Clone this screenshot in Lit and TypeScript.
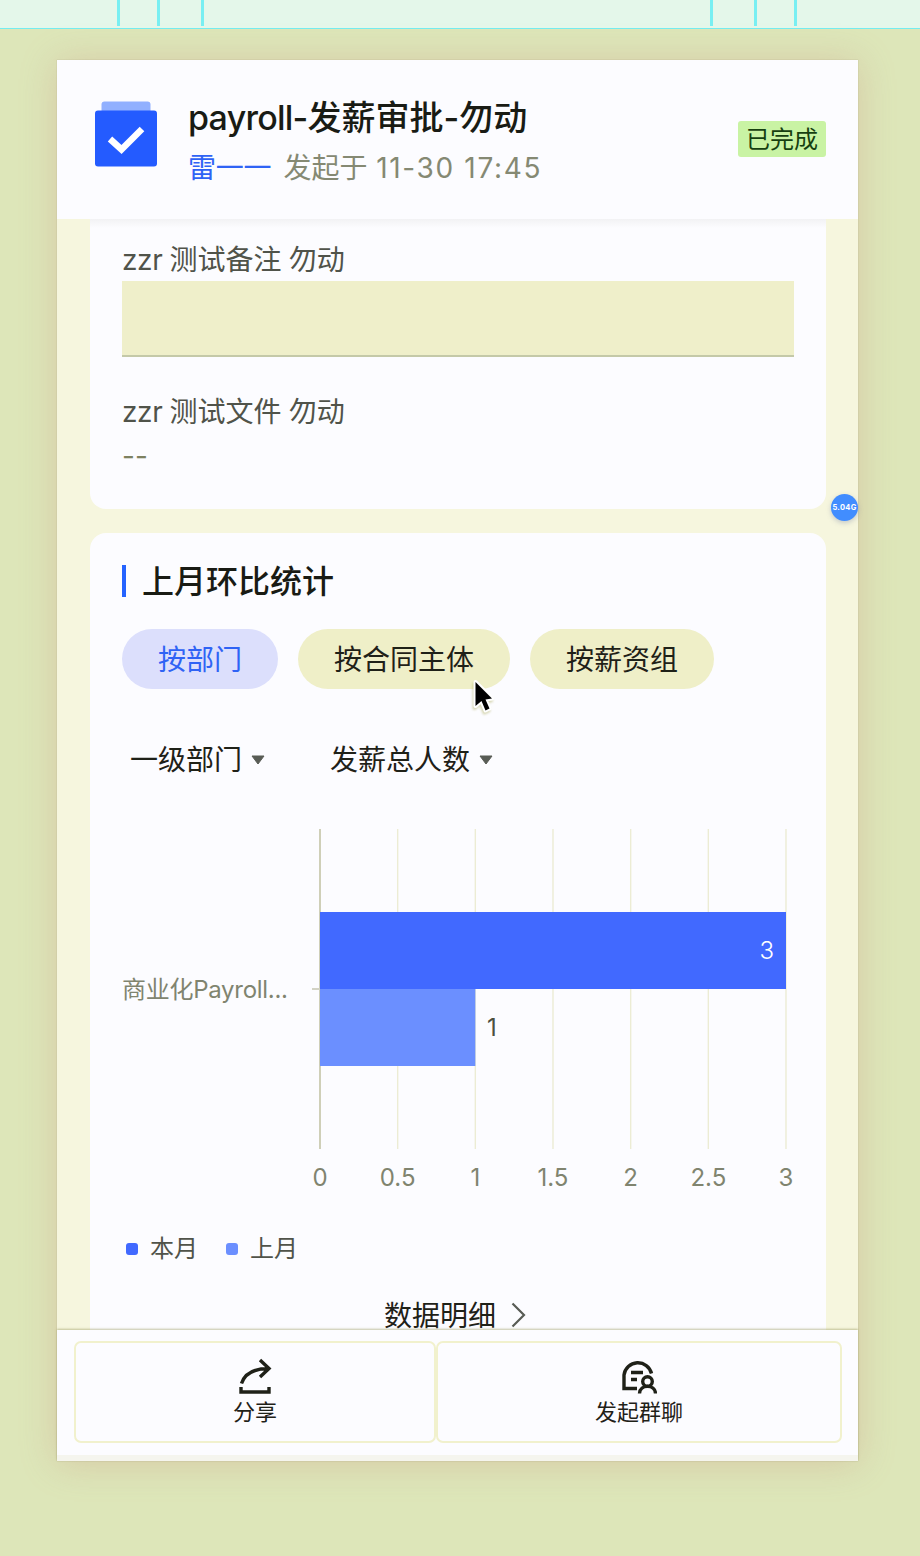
import { LitElement, html, svg, css } from "lit";
import { customElement } from "lit/decorators.js";

const AXIS_X = 198;
const AXIS_W = 466;
const MAX = 3;
const TICKS = [0, 0.5, 1, 1.5, 2, 2.5, 3];
const scale = (v: number) => AXIS_X + (v / MAX) * AXIS_W;

@customElement("month-chart")
export class MonthChart extends LitElement {
  static styles = css`
    :host { display: block; height: 370px; }
    svg { display: block; }
    .tick { font: 24px Inter, "Noto Sans CJK SC", sans-serif; fill: #80846f; }
    .label { font: 24px Inter, "Noto Sans CJK SC", sans-serif; fill: #80846f; }
    .value { font: 24px Inter, sans-serif; fill: #4c5040; }
    .inside { fill: #fff; font-weight: 300; }
  `;
  render() {
    return html`<svg width="672" height="370" viewBox="0 0 672 370">
      ${TICKS.slice(1).map((t) => svg`<path d=${`M${scale(t)} 0V320`} stroke="#ececd4" stroke-width="1.4"/>`)}
      <path d="M198 0V320" stroke="#cfcfb8" stroke-width="2" />
      <path d="M190 160H198" stroke="#d2d2c4" stroke-width="2" />
      <rect x="198" y="83" width=${(3 / MAX) * AXIS_W} height="77" fill="#4169ff" />
      <rect x="198" y="160" width=${(1 / MAX) * AXIS_W} height="77" fill="#6b8fff" />
      <text class="value inside" x="652" y="130" text-anchor="end">3</text>
      <text class="value" x="365" y="207">1</text>
      <text class="label" x="0" y="169" textLength="166" lengthAdjust="spacing">商业化Payroll...</text>
      ${TICKS.map((t) => svg`<text class="tick" x=${scale(t)} y="357" text-anchor="middle">${t}</text>`)}
    </svg>`;
  }
}

@customElement("app-root")
export class AppRoot extends LitElement {
  static styles = css`
    :host {
      display: block;
      position: relative;
      height: 1556px;
      overflow: hidden;
      background: #dde6b9;
      font-family: Inter, "Noto Sans CJK SC", sans-serif;
      color: #1f2118;
    }
    * { box-sizing: border-box; }
    .ruler {
      height: 29px;
      background: #e4f7ea;
      border-bottom: 1px solid #74edf0;
      display: flex;
      justify-content: space-between;
      padding: 0 123px 0 117px;
    }
    .ticks { display: flex; }
    .ticks i { width: 3px; height: 26px; background: #78eff2; }
    .left i:nth-child(1) { margin-right: 37px; }
    .left i:nth-child(2) { margin-right: 41px; }
    .right i:nth-child(1) { margin-right: 41px; }
    .right i:nth-child(2) { margin-right: 37px; }
    .window {
      width: 801px;
      height: 1401px;
      margin: 31px 0 0 57px;
      display: flex;
      flex-direction: column;
      background: #f6f6de;
      box-shadow: 0 0 1px rgba(140, 130, 110, 0.5), 0 2px 34px rgba(200, 140, 120, 0.33);
    }
    .head {
      height: 159px;
      flex: none;
      background: #fcfcff;
      display: flex;
      align-items: flex-start;
      padding: 0 32px 0 38px;
    }
    .logo { margin: 41px 31px 0 0; display: block; flex: none; }
    .names { flex: 1; padding-top: 36px; }
    .title { font-size: 34px; line-height: 44px; font-weight: 500; white-space: nowrap; color: #191b14; }
    .latin { letter-spacing: -0.75px; }
    .sub { font-size: 28px; line-height: 40px; margin-top: 8px; color: #858973; white-space: nowrap; display: flex; gap: 12px; }
    .user { color: #2f63f5; letter-spacing: -0.2px; }
    .time { letter-spacing: 1.65px; margin-left: 1px; }
    .status {
      margin-top: 61px;
      width: 88px;
      height: 36px;
      border-radius: 3px;
      background: #c9f3a4;
      color: #163f10;
      font-size: 24px;
      line-height: 38px;
      text-align: center;
    }
    .scroll { flex: 1; overflow: hidden; padding: 0 32px 0 33px; display: flex; flex-direction: column; gap: 24px; min-height: 0; }
    .card { background: #fcfcff; flex: none; padding: 0 32px; }
    .form { height: 290px; border-radius: 0 0 16px 16px; padding-top: 21px; background: linear-gradient(#f2f2f4, #fcfcff 9px); }
    .name { font-size: 28px; line-height: 40px; color: #50534a; word-spacing: -0.6px; }
    .zzr { letter-spacing: -0.4px; }
    .field { height: 76px; background: #efefca; border-bottom: 2px solid #c4c9a8; margin: 1px 0 35px; }
    .none { font-size: 28px; line-height: 40px; margin-top: 4px; color: #7d8160; }
    .stats { height: 900px; border-radius: 16px; padding-top: 32px; }
    .heading { display: flex; align-items: center; gap: 16px; height: 32px; line-height: 32px; font-size: 32px; font-weight: 500; color: #191b14; white-space: nowrap; }
    .heading i { width: 4px; height: 32px; background: #2563ff; }
    .heading span { margin-top: 1px; }
    .pills { display: flex; gap: 20px; margin-top: 32px; }
    .pill { height: 60px; line-height: 62px; padding: 0 36px; border-radius: 30px; font-size: 28px; background: #efefc8; }
    .on { background: #dcdffc; color: #2f63f5; }
    .selects { display: flex; gap: 65px; margin: 51px 0 48px; padding-left: 8px; height: 41px; line-height: 41px; font-size: 28px; }
    .select { display: flex; align-items: center; gap: 9px; white-space: nowrap; }
    .select svg { margin-top: -2px; }
    .legend { display: flex; gap: 28px; margin-top: 30px; padding-left: 4px; height: 40px; font-size: 24px; color: #50534a; }
    .key { display: flex; align-items: center; gap: 12px; line-height: 40px; }
    .key span { margin-top: -1px; }
    .key i { width: 12px; height: 12px; border-radius: 3px; background: #4169ff; }
    .key .prev { background: #6b8fff; }
    .more { display: flex; align-items: center; justify-content: center; gap: 15px; margin: 26px 0 0 -6px; height: 40px; font-size: 28px; line-height: 40px; }
    .more span { margin-top: 1px; }
    .foot {
      height: 131px;
      flex: none;
      background: #fcfcff;
      border-bottom: 6px solid #f5f5ee;
      padding: 11px 16px 0 17px;
      display: flex;
      box-shadow: 0 -1px 2px rgba(150, 150, 90, 0.55);
      z-index: 1;
    }
    .action {
      width: 362px;
      height: 102px;
      border: 2px solid #f1f1cd;
      border-radius: 7px;
      display: flex;
      flex-direction: column;
      align-items: center;
      padding-top: 15px;
      font-size: 22px;
      line-height: 32px;
    }
    .wide { width: 406px; }
    .action svg { display: block; }
    .share { margin-left: 2px; }
    .memory {
      position: absolute;
      left: 831px;
      top: 494px;
      width: 27px;
      height: 27px;
      border-radius: 50%;
      background: #418dff;
      color: #fff;
      font-size: 7.5px;
      font-weight: 700;
      line-height: 27px;
      text-align: center;
      letter-spacing: 0.3px;
      box-shadow: 0 2px 5px rgba(110, 120, 160, 0.35);
    }
    .cursor { position: absolute; left: 470px; top: 675px; filter: drop-shadow(-1px 2px 1px rgba(170, 170, 90, 0.45)); }
  `;

  render() {
    const caret = html`<svg width="14" height="10" viewBox="0 0 14 10"><path d="M1 1H13L7 9Z" fill="#585c55" stroke="#585c55" stroke-linejoin="round"/></svg>`;
    return html`
      <div class="ruler">
        <div class="ticks left"><i></i><i></i><i></i></div>
        <div class="ticks right"><i></i><i></i><i></i></div>
      </div>
      <main class="window">
        <header class="head">
          <svg class="logo" width="62" height="66" viewBox="0 0 62 66">
            <rect x="6.5" y="0.5" width="49" height="20" rx="3" fill="#91b0ff" />
            <rect x="0" y="9.5" width="62" height="56" rx="3" fill="#245bff" />
            <path d="M15 38L26.500 48.500L47 28" fill="none" stroke="#fff" stroke-width="6.500" />
          </svg>
          <div class="names">
            <div class="title"><span class="latin">payroll-</span>发薪审批-勿动</div>
            <div class="sub"><span class="user">雷一一</span><span>发起于 <span class="time">11-30 17:45</span></span></div>
          </div>
          <div class="status">已完成</div>
        </header>
        <div class="scroll">
          <section class="card form">
            <div class="name"><span class="zzr">zzr</span> 测试备注 勿动</div>
            <div class="field"></div>
            <div class="name"><span class="zzr">zzr</span> 测试文件 勿动</div>
            <div class="none">--</div>
          </section>
          <section class="card stats">
            <div class="heading"><i></i><span>上月环比统计</span></div>
            <div class="pills">
              <div class="pill on">按部门</div>
              <div class="pill">按合同主体</div>
              <div class="pill">按薪资组</div>
            </div>
            <div class="selects">
              <div class="select">一级部门${caret}</div>
              <div class="select">发薪总人数${caret}</div>
            </div>
            <month-chart></month-chart>
            <div class="legend">
              <div class="key"><i></i><span>本月</span></div>
              <div class="key"><i class="prev"></i><span>上月</span></div>
            </div>
            <div class="more"><span>数据明细</span>
              <svg width="15" height="26" viewBox="0 0 15 26"><path d="M1.500 1.500L13 13L1.500 24.500" fill="none" stroke="#585c55" stroke-width="2.200"/></svg>
            </div>
          </section>
        </div>
        <footer class="foot">
          <div class="action">
            <svg class="share" width="36" height="38" viewBox="0 0 36 38" fill="none" stroke="#1f2118" stroke-width="3.400">
              <path d="M3.500 25.500C7 15 16 10.500 31 10.500M22 2L31 10.500L22 19" />
              <path d="M3 29V34H31V29" />
            </svg>
            分享
          </div>
          <div class="action wide">
            <svg width="36" height="38" viewBox="0 0 36 38" fill="none" stroke="#1f2118" stroke-width="3.400">
              <path d="M16 30.500H3V17A14 14 0 0 1 30.500 15.500" />
              <path d="M10 14.500H22M10 21.500H16" />
              <circle cx="26.500" cy="23.500" r="4.800" />
              <path d="M18.500 35.500C19 26 34 26 34.500 35.500" />
            </svg>
            发起群聊
          </div>
        </footer>
      </main>
      <div class="memory">5.04G</div>
      <svg class="cursor" width="28" height="42" viewBox="0 0 28 42">
        <path d="M5.500 7L22 23.500L15.500 24.500L19.500 33.500L15.500 35.500L11.500 26L5.500 31Z" fill="#000" stroke="#fff" stroke-width="4" paint-order="stroke" stroke-linejoin="round" />
      </svg>
    `;
  }
}
